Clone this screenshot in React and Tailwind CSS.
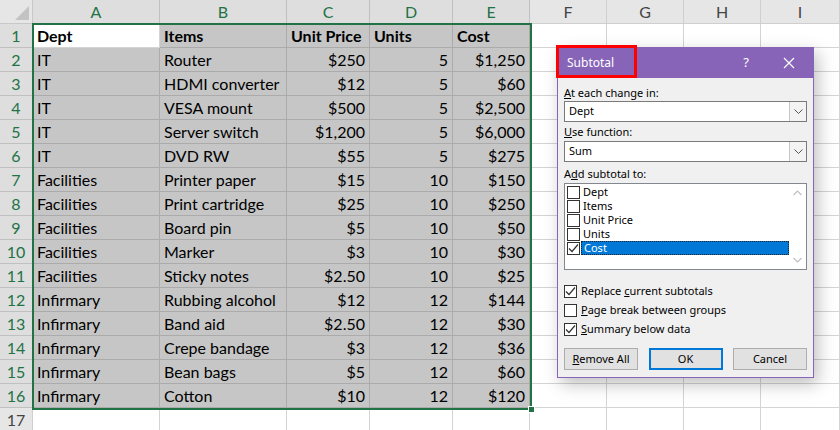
import React from "react";

const cols = ["A", "B", "C", "D", "E", "F", "G", "H", "I"];

const rows = [
  ["Dept", "Items", "Unit Price", "Units", "Cost"],
  ["IT", "Router", "$250", "5", "$1,250"],
  ["IT", "HDMI converter", "$12", "5", "$60"],
  ["IT", "VESA mount", "$500", "5", "$2,500"],
  ["IT", "Server switch", "$1,200", "5", "$6,000"],
  ["IT", "DVD RW", "$55", "5", "$275"],
  ["Facilities", "Printer paper", "$15", "10", "$150"],
  ["Facilities", "Print cartridge", "$25", "10", "$250"],
  ["Facilities", "Board pin", "$5", "10", "$50"],
  ["Facilities", "Marker", "$3", "10", "$30"],
  ["Facilities", "Sticky notes", "$2.50", "10", "$25"],
  ["Infirmary", "Rubbing alcohol", "$12", "12", "$144"],
  ["Infirmary", "Band aid", "$2.50", "12", "$30"],
  ["Infirmary", "Crepe bandage", "$3", "12", "$36"],
  ["Infirmary", "Bean bags", "$5", "12", "$60"],
  ["Infirmary", "Cotton", "$10", "12", "$120"],
];

function Check() {
  return (
    <svg width="11" height="11" viewBox="0 0 11 11">
      <path d="M1 5.5 L4 8.5 L10 1.5" fill="none" stroke="#333" strokeWidth="1.2" />
    </svg>
  );
}

function Box({ checked }) {
  return (
    <div className="w-[13px] h-[13px] border border-[#333] bg-white flex items-center justify-center shrink-0">
      {checked ? <Check /> : null}
    </div>
  );
}

function Select({ value }) {
  return (
    <div className="h-[21px] border border-[#7a7a7a] bg-white flex">
      <div className="flex-1 pl-[4px] flex items-center">{value}</div>
      <div className="w-[17px] border-l border-[#c4c4c4] bg-[#f3f3f3] flex items-center justify-center">
        <svg width="9" height="6" viewBox="0 0 9 6">
          <path d="M0.5 0.5 L4.5 4.5 L8.5 0.5" fill="none" stroke="#555" strokeWidth="1" />
        </svg>
      </div>
    </div>
  );
}

function Cell({ r, c, text }) {
  const selected = r >= 1 && r <= 16 && c <= 4 && !(r === 1 && c === 0);
  const cls = selected
    ? "bg-[#c6c6c6] border-r border-b border-[#ababab]"
    : "bg-white border-r border-b border-[#d4d4d4]";
  const right = c >= 2 && r > 1;
  const bold = r === 1;
  return (
    <div
      className={`${cls} h-[24px] flex items-center pt-[1px] overflow-hidden whitespace-nowrap ${
        right ? "justify-end pr-[4px]" : "pl-[4px]"
      } ${bold ? "font-bold" : ""}`}
    >
      {text}
    </div>
  );
}

export default function App() {
  return (
    <div className="relative w-[840px] h-[430px] overflow-hidden bg-white text-[16px] text-black font-['Lato',sans-serif]">
      <div className="grid grid-cols-[33px_127px_127px_83px_83px_77px_77px_77px_77px_79px]">
        <div className="h-[24px] bg-[#e6e6e6] border-r border-b border-[#c8c8c8] relative">
          <div className="absolute right-[3px] bottom-[3px] w-0 h-0 border-l-[14px] border-l-transparent border-b-[14px] border-b-[#c3c3c3]" />
        </div>
        {cols.map((c, i) => (
          <div
            key={c}
            className={`h-[24px] border-r border-b flex items-center justify-center pt-[1px] text-[16px] ${
              i <= 4
                ? "bg-[#dedede] border-[#c0c0c0] text-[#217346]"
                : "bg-[#e6e6e6] border-[#cfcfcf] text-[#444]"
            }`}
          >
            {c}
          </div>
        ))}
        {Array.from({ length: 17 }).map((_, ri) => {
          const r = ri + 1;
          const data = rows[ri] || [];
          return (
            <React.Fragment key={r}>
              <div
                className={`h-[24px] border-r border-b flex items-center justify-center pt-[1px] text-[16px] ${
                  r <= 16
                    ? "bg-[#dedede] border-[#c0c0c0] text-[#217346]"
                    : "bg-[#e6e6e6] border-[#cfcfcf] text-[#444]"
                }`}
              >
                {r}
              </div>
              {cols.map((c, ci) => (
                <Cell key={c} r={r} c={ci} text={data[ci]} />
              ))}
            </React.Fragment>
          );
        })}
      </div>

      {/* selection outline */}
      <div className="absolute left-[32px] top-[23px] w-[500px] h-[387px] border-2 border-[#217346] pointer-events-none" />
      <div className="absolute left-[528px] top-[406px] w-[7px] h-[7px] bg-[#217346] border border-white" />

      {/* Subtotal dialog */}
      <div className="absolute left-[557px] top-[47px] w-[257px] h-[331px] border border-[#8764b8] bg-[#f0f0f0] shadow-[4px_6px_16px_rgba(0,0,0,0.25)] text-[11px] font-['Noto_Sans',sans-serif] text-black">
        <div className="h-[30px] bg-[#8764b8] text-white text-[12px] flex items-center pl-[9px]">
          <span className="flex-1">Subtotal</span>
          <span className="w-[20px] text-center text-[13px] mr-[27px]">?</span>
          <svg width="12" height="12" viewBox="0 0 12 12" className="mr-[18px]">
            <path d="M1 1 L11 11 M11 1 L1 11" stroke="#fff" strokeWidth="1.2" />
          </svg>
        </div>
        <div className="px-[6px]">
          <div className="mt-[7px] h-[15px] leading-[15px]">
            <u>A</u>t each change in:
          </div>
          <div className="mt-[1px]">
            <Select value="Dept" />
          </div>
          <div className="mt-[2px] h-[15px] leading-[15px]">
            <u>U</u>se function:
          </div>
          <div className="mt-[2px]">
            <Select value="Sum" />
          </div>
          <div className="mt-[4px] h-[15px] leading-[15px]">
            A<u>d</u>d subtotal to:
          </div>
          <div className="mt-[2px] h-[87px] border border-[#828790] bg-white flex">
            <div className="flex-1 pt-[1px] pl-[2px]">
              {["Dept", "Items", "Unit Price", "Units", "Cost"].map((item, i) => (
                <div key={item} className="h-[14px] flex items-center">
                  <Box checked={i === 4} />
                  <div
                    className={`ml-[1px] flex-1 h-[14px] leading-[12px] pl-[2px] overflow-hidden ${
                      i === 4 ? "bg-[#0078d7] text-white border border-dotted border-[#222]" : "pt-[1px]"
                    }`}
                  >
                    {item}
                  </div>
                </div>
              ))}
            </div>
            <div className="w-[17px] flex flex-col justify-between items-center py-[6px]">
              <svg width="9" height="6" viewBox="0 0 9 6">
                <path d="M0.5 5 L4.5 1 L8.5 5" fill="none" stroke="#c0c0c0" strokeWidth="1.2" />
              </svg>
              <svg width="9" height="6" viewBox="0 0 9 6">
                <path d="M0.5 1 L4.5 5 L8.5 1" fill="none" stroke="#c0c0c0" strokeWidth="1.2" />
              </svg>
            </div>
          </div>
          <div className="mt-[14px] flex flex-col gap-[5px]">
            <div className="flex items-center gap-[4px] h-[14px]">
              <Box checked />
              <span>
                Replace <u>c</u>urrent subtotals
              </span>
            </div>
            <div className="flex items-center gap-[4px] h-[14px]">
              <Box />
              <span>
                <u>P</u>age break between groups
              </span>
            </div>
            <div className="flex items-center gap-[4px] h-[14px]">
              <Box checked />
              <span>
                <u>S</u>ummary below data
              </span>
            </div>
          </div>
          <div className="mt-[12px] flex justify-between">
            <div className="w-[74px] h-[22px] border border-[#adadad] bg-[#e1e1e1] flex items-center justify-center">
              <span>
                <u>R</u>emove All
              </span>
            </div>
            <div className="w-[74px] h-[22px] border-2 border-[#0078d7] bg-[#e1e1e1] flex items-center justify-center">
              OK
            </div>
            <div className="w-[74px] h-[22px] border border-[#adadad] bg-[#e1e1e1] flex items-center justify-center">
              Cancel
            </div>
          </div>
        </div>
      </div>
      <div className="absolute left-[556px] top-[45px] w-[81px] h-[33px] border-[3px] border-[#ff0000]" />
    </div>
  );
}
